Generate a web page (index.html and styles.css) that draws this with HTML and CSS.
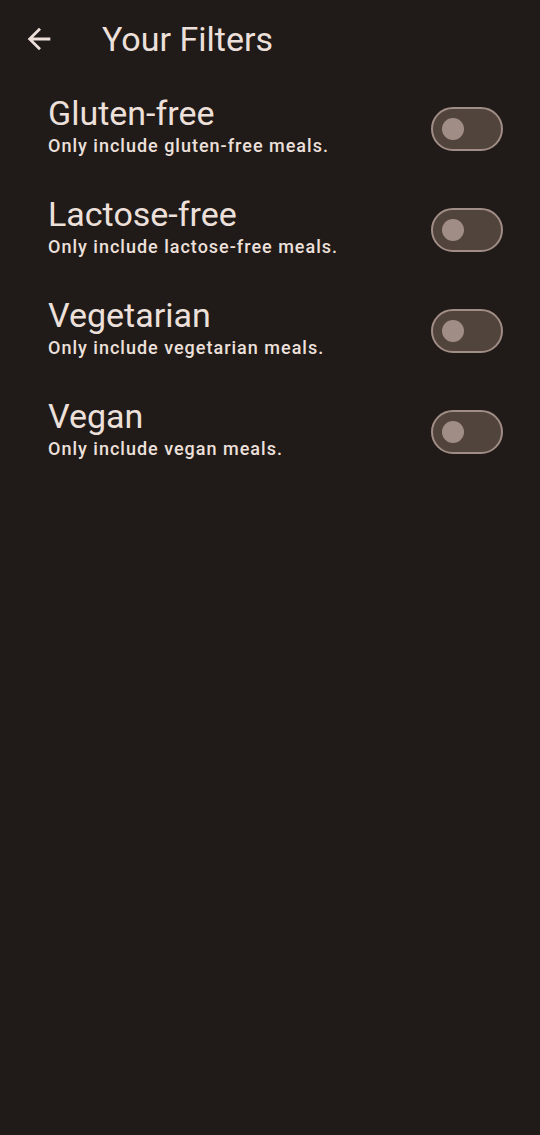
FILE: index.html
```html
<!DOCTYPE html>
<html lang="en">
<head>
<meta charset="utf-8">
<title>Your Filters</title>
<link rel="stylesheet" href="styles.css">
</head>
<body>
<div class="screen">
  <header class="appbar">
    <button class="back" aria-label="Back">
      <svg viewBox="0 0 24 24" width="34" height="34"><path d="M20 11H7.83l5.59-5.59L12 4l-8 8 8 8 1.41-1.41L7.83 13H20v-2z" fill="currentColor"/></svg>
    </button>
    <h1 class="title">Your Filters</h1>
  </header>
  <main class="list">
    <div class="tile">
      <div class="text">
        <div class="tile-title">Gluten-free</div>
        <div class="tile-sub">Only include gluten-free meals.</div>
      </div>
      <span class="switch"><span class="thumb"></span></span>
    </div>
    <div class="tile">
      <div class="text">
        <div class="tile-title">Lactose-free</div>
        <div class="tile-sub">Only include lactose-free meals.</div>
      </div>
      <span class="switch"><span class="thumb"></span></span>
    </div>
    <div class="tile">
      <div class="text">
        <div class="tile-title">Vegetarian</div>
        <div class="tile-sub">Only include vegetarian meals.</div>
      </div>
      <span class="switch"><span class="thumb"></span></span>
    </div>
    <div class="tile">
      <div class="text">
        <div class="tile-title">Vegan</div>
        <div class="tile-sub">Only include vegan meals.</div>
      </div>
      <span class="switch"><span class="thumb"></span></span>
    </div>
  </main>
</div>
</body>
</html>
```

FILE: styles.css
```css
html, body {
  margin: 0;
  padding: 0;
  background: #201a18;
}
body {
  font-family: Roboto, "Noto Sans", sans-serif;
  color: #ede0db;
}
.screen {
  width: 540px;
  min-height: 1135px;
  background: #201a18;
}
.appbar {
  height: 78px;
  display: flex;
  align-items: center;
}
.back {
  width: 34px;
  height: 34px;
  margin-left: 22px;
  padding: 0;
  border: 0;
  background: none;
  color: #ede0db;
  display: flex;
}
.title {
  margin: 0 0 0 46px;
  font-size: 34px;
  font-weight: 400;
  line-height: 78px;
}
.list {
  display: flex;
  flex-direction: column;
}
.tile {
  height: 101px;
  display: flex;
  align-items: center;
  padding: 0 37px 0 48px;
}
.text {
  flex: 1;
  padding-bottom: 4px;
}
.tile-title {
  font-size: 34px;
  line-height: 32px;
  font-weight: 400;
}
.tile-sub {
  margin-top: 6px;
  font-size: 18px;
  line-height: 22px;
  font-weight: 500;
  letter-spacing: 1px;
}
.switch {
  box-sizing: border-box;
  width: 72px;
  height: 44px;
  border: 2.8px solid #a08d85;
  border-radius: 22px;
  background: #51443d;
  display: flex;
  align-items: center;
  padding-left: 8.5px;
}
.thumb {
  width: 22px;
  height: 22px;
  border-radius: 50%;
  background: #a08d85;
}
```
